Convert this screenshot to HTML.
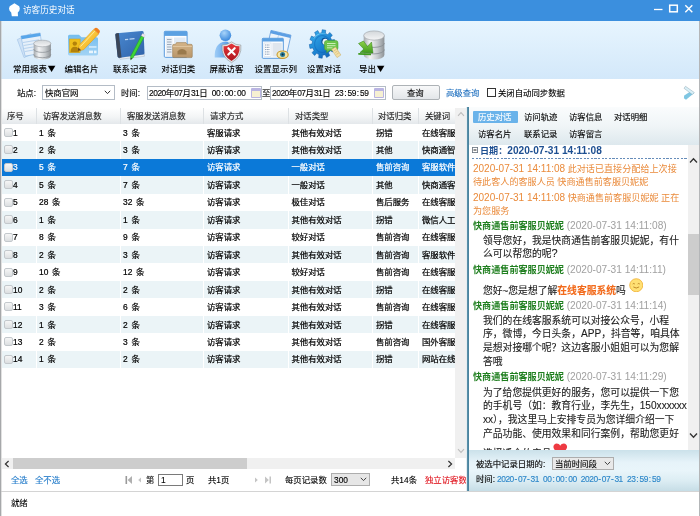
<!DOCTYPE html>
<html lang="zh-CN">
<head>
<meta charset="utf-8">
<title>访客历史对话</title>
<style>
*{box-sizing:border-box;margin:0;padding:0}
html,body{width:700px;height:516px;overflow:hidden;background:#fff}
#app{position:absolute;left:0;top:0;width:700px;height:516px;will-change:transform;transform:translateZ(0)}
body{position:relative;font-family:"Liberation Sans","Noto Sans CJK SC",sans-serif;font-size:8.4px;color:#000;line-height:1;font-weight:400;-webkit-text-stroke:0.120px}
.abs{position:absolute}
.t{position:absolute;white-space:nowrap;line-height:10px}
i,b{font-style:normal;font-weight:normal}
.t b{line-height:0}
#titlebar{left:0;top:0;width:700px;height:21px;background:#3b8fde}
#title{left:23px;top:5px;color:#fff;font-size:8.6px;-webkit-text-stroke:0}
#toolbar{left:1px;top:21px;width:698px;height:58px;background:linear-gradient(#e7f5fe,#d3e8fa)}
.tb{position:absolute;top:21px;height:58px}
.tb .lbl{position:absolute;top:42px;left:50%;transform:translateX(-50%);white-space:nowrap;font-size:8.5px;line-height:10px;color:#111}
.tb svg{position:absolute;top:8px;left:50%;margin-left:-18px;width:36px;height:32px}
#filter{left:1px;top:79px;width:698px;height:29px;background:#fff}
.inp{position:absolute;border:1px solid #b4bcc6;background:#fff}
.mono{font-family:"Liberation Mono","Noto Sans CJK SC",monospace;letter-spacing:-0.84px}
#win{left:0;top:21px;width:700px;height:495px;border-left:1px solid #a6a8aa;border-right:1px solid #b4b6b8;box-shadow:inset 1px 0 0 rgba(200,200,200,.55);pointer-events:none}
/* table */
#thead{left:2px;top:108px;width:453px;height:16px;background:linear-gradient(#ffffff,#f3f5f6 55%,#e4e8eb)}
#thead .t{top:3px;color:#1c1c1c;-webkit-text-stroke:0.150px}
.sep{position:absolute;top:0;width:1px;height:16px;background:#dde1e4}
.row{position:absolute;left:2px;width:453px;height:17.450px;font-weight:400;-webkit-text-stroke:0.220px}
.row.ev i{background:#ebf4f7}
.row.sel{background:#0b79d8;color:#fff}
.row i{position:absolute;top:0;height:100%;display:block}
.row .t{top:3.700px;word-spacing:1.400px}
.row .cb{position:absolute;left:2px;top:4px;width:9px;height:9px;border:1px solid #c3c8cc;border-radius:2px;background:linear-gradient(#f6f6f6,#dcdfe1)}
/* scrollbars */
.sb{position:absolute;background:#f0f0f0}
/* right */
#rborder{left:466px;top:107px;width:3px;height:384px;background:linear-gradient(90deg,#e4edf1 0,#e4edf1 22%,#5e93ab 34%,#447f9c 100%)}
#tabs{left:469px;top:107px;width:230px;height:38px;background:linear-gradient(#fafcfd,#f0f5f7 50%,#dde8ed)}
#tabs .t{font-size:8.4px;color:#111}
#tabsel{left:473px;top:111px;width:45px;height:12px;background:#6ab3ea;border-radius:1px}
#chat{-webkit-text-stroke:0;left:469px;top:145px;width:219px;height:305px;background:#fff;overflow:hidden;font-family:"Liberation Sans","Noto Sans CJK SC",sans-serif}
#chat .t{font-size:9.8px;line-height:13px}
.or{color:#ea8a3a;font-size:9.100px !important}
.d{font-size:10px}
.gn{color:#1f7f1f;font-weight:bold;font-size:9.100px}
.gy{color:#a0a0a0;font-size:10.150px}
.ms{color:#1c1c1c;-webkit-text-stroke:0.100px}
#rbot{left:469px;top:450px;width:230px;height:41px;background:linear-gradient(#cbe1ea 0%,#e6f3f9 30%,#e9f5fa 50%,#dcedf3 75%,#c6dde6 100%)}
.cal{width:10px;height:10px;border:1.5px solid #b9b4e2;border-top-width:3px;background:#f6f0d2;border-radius:1px}
.blue{color:#1e78c8}
.tri{font-size:10px;line-height:0;margin-left:0.800px;display:inline-block;transform:scaleY(.82);font-family:"DejaVu Sans",sans-serif}
.lbl2{font-size:8.500px;color:#000;font-weight:500;-webkit-text-stroke:0}
.dt{font-size:8.400px;letter-spacing:-0.840px}
.dt b{letter-spacing:0;font-family:"Liberation Sans","Noto Sans CJK SC",sans-serif}
.hw{letter-spacing:-0.470px}
.hw i{display:inline-block;width:4.200px;text-align:center;letter-spacing:0;white-space:pre}
.hw b{letter-spacing:0}

</style>
</head>
<body>
<div id="app">
<div id="titlebar" class="abs"></div>
<svg class="abs" style="left:0;top:0" width="24" height="20" viewBox="0 0 24 20"><path d="M14.400 3.300 L19.200 6.200 L19.800 8.500 L19.300 10.800 L17.800 12.600 L18 16.300 L11.800 16.300 L11.200 12.600 L9.600 10.800 L9 8.500 L9.700 6.200 Z" fill="#fff"/></svg>
<div id="title" class="t">访客历史对话</div>
<svg class="abs" style="left:652px;top:2px" width="44" height="14" viewBox="0 0 44 14"><path d="M2 7.5h8.5" stroke="#fff" stroke-width="1.3" fill="none"/><rect x="17.7" y="3.2" width="7.6" height="6.6" stroke="#fff" stroke-width="1.5" fill="none"/><path d="M33.3 3.2l7 7M40.3 3.2l-7 7" stroke="#fff" stroke-width="1.4" fill="none"/></svg>
<div id="toolbar" class="abs"></div>
<svg class="abs" style="left:0;top:21px" width="400" height="58" viewBox="0 21 400 58">
<defs>
<linearGradient id="gSil" x1="0" x2="1" y1="0" y2="0"><stop offset="0" stop-color="#a3a8ac"/><stop offset=".3" stop-color="#f3f4f5"/><stop offset=".65" stop-color="#c9cdd0"/><stop offset="1" stop-color="#8d9296"/></linearGradient>
<linearGradient id="gSilTop" x1="0" x2="0" y1="0" y2="1"><stop offset="0" stop-color="#d3d7da"/><stop offset="1" stop-color="#f4f5f6"/></linearGradient>
<linearGradient id="gBook" x1="0" x2="1" y1="0" y2="1"><stop offset="0" stop-color="#4b8ad2"/><stop offset="1" stop-color="#2f62a8"/></linearGradient>
<radialGradient id="gHead" cx=".4" cy=".3" r=".7"><stop offset="0" stop-color="#a8d4fa"/><stop offset="1" stop-color="#3a88dc"/></radialGradient>
<linearGradient id="gBody" x1="0" x2="1" y1="0" y2="0"><stop offset="0" stop-color="#9fcdf7"/><stop offset="1" stop-color="#3f8ce0"/></linearGradient>
<linearGradient id="gShield" x1="0" x2="0" y1="0" y2="1"><stop offset="0" stop-color="#e8383c"/><stop offset="1" stop-color="#a8141c"/></linearGradient>
<linearGradient id="gGear" x1="0" x2="1" y1="0" y2="1"><stop offset="0" stop-color="#38b0ee"/><stop offset=".55" stop-color="#1c84d2"/><stop offset="1" stop-color="#0e58ae"/></linearGradient>
<linearGradient id="gArrow" x1="0" x2="0" y1="0" y2="1"><stop offset="0" stop-color="#8ed24a"/><stop offset="1" stop-color="#3f9a1c"/></linearGradient>
<linearGradient id="gFolder" x1="0" x2="0" y1="0" y2="1"><stop offset="0" stop-color="#d4b488"/><stop offset="1" stop-color="#b8966a"/></linearGradient>
<linearGradient id="gCard" x1="0" x2="0" y1="0" y2="1"><stop offset="0" stop-color="#74bdee"/><stop offset="1" stop-color="#a2d3f5"/></linearGradient>
<linearGradient id="gPencil" x1="0" x2="1" y1="0" y2="1"><stop offset="0" stop-color="#ffe06a"/><stop offset="1" stop-color="#f2a80c"/></linearGradient>
</defs>
<!-- 1 report -->
<g>
<path d="M17.300 39.500 L31 33.500 L38 52 L24 57.500Z" fill="#cfe2f6" stroke="#9cc0e6" stroke-width=".6"/>
<path d="M20.900 36.100 L40.100 32.900 L43 53 L25.100 56.100Z" fill="#e6f0fa" stroke="#8fb8e4" stroke-width=".6"/>
<path d="M20.900 36.100 L40.100 32.900 L40.600 36 L21.600 39.200Z" fill="#58a6ea"/>
<path d="M23 42.500l16-2.700M23.600 45.500l16-2.700M24.200 48.500l10-1.700M24.800 51.500l9-1.500" stroke="#a9c9ea" stroke-width=".8"/>
<path d="M33.700 43.500 L33.700 56 A8.600 3.600 0 0 0 50.900 56 L50.900 43.500Z" fill="url(#gSil)"/>
<path d="M33.700 49 A8.600 3.400 0 0 0 50.900 49" fill="none" stroke="#858b90" stroke-width=".7"/>
<path d="M33.700 54.300 A8.600 3.400 0 0 0 50.900 54.300" fill="none" stroke="#858b90" stroke-width=".7"/>
<ellipse cx="42.300" cy="43.500" rx="8.600" ry="3.300" fill="url(#gSilTop)" stroke="#9aa0a5" stroke-width=".6"/>
</g>
<!-- 2 card -->
<g>
<path d="M68 36.200 Q68 34.700 69.500 34.700 L79 34.700 L81.500 37.200 L96.500 37.200 Q98 37.200 98 38.700 L98 54 Q98 55.400 96.500 55.400 L69.500 55.400 Q68 55.400 68 54Z" fill="url(#gCard)"/>
<rect x="89" y="46.300" width="7.500" height="1.300" fill="#e4f3fc"/><rect x="89" y="50.600" width="4" height="2.600" fill="#e9f5fd"/><rect x="94" y="50.600" width="2.500" height="2.600" fill="#e9f5fd"/>
<rect x="69.500" y="39" width="10.600" height="13.600" fill="#efbf1c" stroke="#d49c0c" stroke-width=".5"/>
<circle cx="74.800" cy="43.600" r="2.200" fill="#b3820a"/><path d="M70.500 52.300 Q70.500 46.800 74.800 46.800 Q79.100 46.800 79.100 52.300Z" fill="#b3820a"/>
<path d="M79 45.300 L93.800 29.300 L98.700 33.900 L83.500 49.800 L77.600 51Z" fill="url(#gPencil)" stroke="#d8940a" stroke-width=".5"/>
<path d="M93.800 29.300 L95 28.100 Q96.300 27.200 97.500 28.300 L99.500 30.200 Q100.400 31.400 99.500 32.700 L98.700 33.900Z" fill="#f0801e"/>
<path d="M77.600 51 L78.400 47.600 L81.200 50.200Z" fill="#6a4a1a"/>
<path d="M80.500 46.500 L94.800 31.200" stroke="#fff3b0" stroke-width="1" opacity=".8"/>
</g>
<!-- 3 book -->
<g>
<path d="M119 57.500 L144.400 54 L144.400 56.300 L120 59.300Z" fill="#e9edf2" stroke="#9aa6b4" stroke-width=".4"/>
<path d="M115.300 34.800 Q115.300 33.500 116.800 33.300 L141.800 30.900 Q143.500 30.800 143.600 32.300 L144.500 53.200 Q144.500 54.300 143.300 54.500 L119.500 57.800 Q118 57.900 117.600 56.500Z" fill="url(#gBook)"/>
<path d="M115.300 34.800 Q115.300 33.500 116.800 33.300 L118.800 33.100 L121.500 57.500 L119.500 57.800 Q118 57.900 117.600 56.500Z" fill="#3b4658"/>
<path d="M125 39.600l3.200-.3M129.500 39.200l5-.5" stroke="#b9d4f2" stroke-width="1.300"/>
<path d="M141.300 35.800 L144 37.200 L133.300 57.500 L130.700 59.800 L130.700 56.200Z" fill="#3fd636" stroke="#1f9a1c" stroke-width=".5"/>
<path d="M141.300 35.800 L142.500 33.500 L145.200 34.900 L144 37.200Z" fill="#f6e8ee" stroke="#c9b0bc" stroke-width=".3"/>
<path d="M130.700 59.800 L130.700 57.800 L132.200 58.600Z" fill="#333"/>
</g>
<!-- 4 classify -->
<g>
<rect x="164.300" y="31.300" width="22.800" height="26" rx="1" fill="#fbfdff" stroke="#4a8fd8" stroke-width=".9"/>
<rect x="164.300" y="31.300" width="22.800" height="4.600" fill="#5aa0e2"/>
<rect x="166" y="37.500" width="6.500" height="18.500" fill="#e8eef5"/>
<path d="M167 39.500h4.500M167 42h4.500M167 44.500h4.500M167 47h4.500M167 49.500h4.500M167 52h4.500" stroke="#8a99ab" stroke-width=".8"/>
<rect x="174" y="37.500" width="11.500" height="6" fill="#dfeaf6"/>
<path d="M172.600 45.500 Q172.600 44.300 173.800 44.300 L175.500 44.300 L176.500 42.600 L186 42.600 L187 44.300 L191.100 44.300 Q192.300 44.300 192.300 45.500 L192.300 56.400 Q192.300 57.600 191.100 57.600 L173.800 57.600 Q172.600 57.600 172.600 56.400Z" fill="url(#gFolder)" stroke="#8f7248" stroke-width=".5"/>
<path d="M172.900 46.500h19.100" stroke="#e6d0ac" stroke-width=".7"/>
<path d="M177.500 54.500 L177.500 51.200 Q182 47 186.500 51.200 L186.500 54.500Z" fill="#9a7a4c"/>
</g>
<!-- 5 block visitor -->
<g>
<path d="M214.700 57.600 Q214 43 225.400 41.500 Q233.500 42 233 57.600Z" fill="url(#gBody)"/>
<circle cx="225.400" cy="35.300" r="5.800" fill="url(#gHead)"/>
<path d="M231.500 42.600 Q227.500 45.800 222.800 45.600 Q221.600 56.500 231.500 61.900 Q241.400 56.500 240.200 45.600 Q235.500 45.800 231.500 42.600Z" fill="url(#gShield)" stroke="#e4e6e8" stroke-width="1.500"/>
<path d="M231.500 42.600 Q227.500 45.800 222.800 45.600 Q221.600 56.500 231.500 61.900 Q241.400 56.500 240.200 45.600 Q235.500 45.800 231.500 42.600Z" fill="none" stroke="#6f7478" stroke-width=".4" transform="translate(231.500 52) scale(1.080) translate(-231.500 -52)"/>
<path d="M228.300 48.200l6.400 6.400M234.700 48.200l-6.400 6.400" stroke="#fff" stroke-width="2.100" stroke-linecap="round"/>
</g>
<!-- 6 columns -->
<g>
<path d="M271 30.400 L291 35.200 L286.500 55 L266.500 50.200Z" fill="#eef4fb" stroke="#5d98da" stroke-width=".8"/>
<path d="M271 30.400 L291 35.200 L290.300 38 L270.400 33.200Z" fill="#5d9fe4"/>
<path d="M278.500 35 L275.500 49" stroke="#9dbfe6" stroke-width=".6"/>
<rect x="262.300" y="38.300" width="21" height="20" rx=".8" fill="#f8fbfe" stroke="#4a8fd8" stroke-width=".9"/>
<rect x="262.300" y="38.300" width="21" height="3.200" fill="#5aa0e2"/>
<rect x="264" y="43" width="7" height="13.500" fill="#fff" stroke="#b9cbe0" stroke-width=".4"/>
<path d="M265.200 45h4.500M265.200 47.300h4.500M265.200 49.600h4.500M265.200 51.900h4.500M265.200 54.200h4.500" stroke="#4f6f95" stroke-width=".8" stroke-dasharray="1 .6"/>
<rect x="272.500" y="43" width="9.300" height="13.500" fill="#dfe6ee"/>
<ellipse cx="282.600" cy="54.700" rx="5.600" ry="3.700" fill="#f4e6a8" stroke="#c99a2a" stroke-width="1.100"/>
<circle cx="282.600" cy="54.500" r="2.500" fill="#2a7d9c"/><circle cx="282.600" cy="54.500" r="1" fill="#0f2a38"/>
</g>
<!-- 7 gear -->
<g>
<g transform="translate(322.200 44) scale(.9 1) rotate(8)">
<path d="M-2.10 -11.00 L-1.97 -14.16 L1.97 -14.16 L2.10 -11.00 L4.77 -10.13 L6.73 -12.62 L9.92 -10.30 L8.16 -7.67 L9.81 -5.40 L12.86 -6.25 L14.08 -2.50 L11.11 -1.40 L11.11 1.40 L14.08 2.50 L12.86 6.25 L9.81 5.40 L8.16 7.67 L9.92 10.30 L6.73 12.62 L4.77 10.13 L2.10 11.00 L1.97 14.16 L-1.97 14.16 L-2.10 11.00 L-4.77 10.13 L-6.73 12.62 L-9.92 10.30 L-8.16 7.67 L-9.81 5.40 L-12.86 6.25 L-14.08 2.50 L-11.11 1.40 L-11.11 -1.40 L-14.08 -2.50 L-12.86 -6.25 L-9.81 -5.40 L-8.16 -7.67 L-9.92 -10.30 L-6.73 -12.62 L-4.77 -10.13Z" fill="url(#gGear)" stroke="#0d5aa6" stroke-width=".5" stroke-linejoin="round"/>
<circle r="8.500" fill="none" stroke="#0e62b4" stroke-width="1.200" opacity=".45"/>
<path d="M-10.500 -3 A11 11 0 0 1 4 -10.300 A13 13 0 0 0 -10.500 -3Z" fill="#8fdcfa" opacity=".75"/>
<circle cx="2.400" cy="-3" r="3.700" fill="#0b4f94"/>
<circle cx="2.900" cy="-2.600" r="3" fill="#e9f3fb"/>
</g>
<path d="M324.400 43 Q324.400 40.400 327 40.400 L335.500 40.400 Q338 40.400 338 43 L338 47.800 Q338 50.400 335.500 50.400 L329.500 50.400 L326.500 52.800 L327 50.400 Q324.400 50.400 324.400 47.800Z" fill="#6cc44a" stroke="#44982a" stroke-width=".5"/>
<path d="M327 43.500h8.500M327 45.700h8.500M327 47.800h5.500" stroke="#d6f2c4" stroke-width=".9"/>
<path d="M331.600 49.500 L335.500 46.900 L340.900 55 L337 57.600Z" fill="#f2dfa6" stroke="#c8a85c" stroke-width=".5"/>
<path d="M334 50.800l2.500-1.600M335.200 52.600l2.500-1.600M336.400 54.400l2.500-1.600" stroke="#c8a85c" stroke-width=".5"/>
</g>
<!-- 8 export -->
<g>
<path d="M363.700 35.500 L363.700 55 A10.350 4.600 0 0 0 384.400 55 L384.400 35.500Z" fill="url(#gSil)"/>
<path d="M363.700 43 A10.350 4.400 0 0 0 384.400 43" fill="none" stroke="#858b90" stroke-width=".8"/>
<path d="M363.700 49.500 A10.350 4.400 0 0 0 384.400 49.500" fill="none" stroke="#858b90" stroke-width=".8"/>
<ellipse cx="374.050" cy="35.500" rx="10.350" ry="4.600" fill="url(#gSilTop)" stroke="#9aa0a5" stroke-width=".6"/>
<path d="M358.500 43.500 L363.500 41 L367.500 46.500 L371.500 42 L373 53 L360 52.500 L363.800 49Z" fill="url(#gArrow)" stroke="#2f7f14" stroke-width=".5"/>
<path d="M358.300 53 L371 53.500 L371 55.300 L358.300 54.800Z" fill="#3f9a1c"/>
</g>
</svg>

<span class="t lbl2" style="left:13px;top:64px">常用报表<b class="tri">▼</b></span>
<span class="t lbl2" style="left:64.5px;top:64px">编辑名片</span>
<span class="t lbl2" style="left:113px;top:64px">联系记录</span>
<span class="t lbl2" style="left:161.2px;top:64px">对话归类</span>
<span class="t lbl2" style="left:209.6px;top:64px">屏蔽访客</span>
<span class="t lbl2" style="left:254.6px;top:64px">设置显示列</span>
<span class="t lbl2" style="left:307px;top:64px">设置对话</span>
<span class="t lbl2" style="left:359px;top:64px">导出<b class="tri">▼</b></span>
<div id="filter" class="abs"></div>
<span class="t" style="left:17px;top:88px">站点:</span>
<div class="inp" style="left:42px;top:85px;width:73px;height:15px"></div>
<span class="t" style="left:45px;top:88px">快商官网</span>
<svg class="abs" style="left:104px;top:90px" width="7" height="5" viewBox="0 0 7 5"><path d="M.8.8l2.700 2.800L6.200.8" fill="none" stroke="#333" stroke-width="1"/></svg>
<span class="t" style="left:121px;top:88px">时间:</span>
<div class="inp" style="left:147px;top:86px;width:115px;height:14px"></div>
<span class="t hw" style="left:149px;top:88px">2020<b>年</b>07<b>月</b>31<b>日</b><i> </i>00<i>:</i>00<i>:</i>00</span>
<div class="abs cal" style="left:251px;top:88px"></div>
<span class="t" style="left:262px;top:88px">至</span>
<div class="inp" style="left:270px;top:86px;width:116px;height:14px"></div>
<span class="t hw" style="left:272px;top:88px">2020<b>年</b>07<b>月</b>31<b>日</b><i> </i>23<i>:</i>59<i>:</i>59</span>
<div class="abs cal" style="left:374px;top:88px"></div>
<div class="abs" id="qbtn" style="left:392px;top:85px;width:48px;height:15px;border:1px solid #adb2b6;border-radius:2px;background:linear-gradient(#f7f8f9,#e3e6e9)"></div>
<span class="t" style="left:407px;top:88px">查询</span>
<span class="t" style="left:446px;top:88px;color:#1e6fbf">高级查询</span>
<div class="abs" style="left:487px;top:88px;width:9px;height:9px;border:1px solid #333;background:#fff"></div>
<span class="t" style="left:498px;top:88px">关闭自动同步数据</span>
<svg class="abs" style="left:680px;top:84px" width="18" height="18" viewBox="680 84 18 18"><path d="M694.200 93 L686 99.700 L683.900 98.200 L684.200 95.400 L690.400 91.600Z" fill="#7fc6e2"/><path d="M684 88.300 L685.500 86.300 L694.300 92.500 L692.300 94.500Z" fill="#d9f0f8" stroke="#8fa6b2" stroke-width=".5"/></svg>
<div id="thead" class="abs">
<span class="t" style="left:5px">序号</span><span class="t" style="left:41px">访客发送消息数</span><span class="t" style="left:125px">客服发送消息数</span><span class="t" style="left:208px">请求方式</span><span class="t" style="left:293px">对话类型</span><span class="t" style="left:376px">对话归类</span><span class="t" style="left:423px">关键词</span><b class="sep" style="left:34px"></b><b class="sep" style="left:118px"></b><b class="sep" style="left:201px"></b><b class="sep" style="left:286px"></b><b class="sep" style="left:370px"></b><b class="sep" style="left:416px"></b>
</div>
<div id="rows">
<div class="row" style="top:123.90px"><i style="left:0px;width:34px"></i><i style="left:35px;width:83px"></i><i style="left:119px;width:82px"></i><i style="left:202px;width:84px"></i><i style="left:287px;width:83px"></i><i style="left:371px;width:45px"></i><i style="left:417px;width:36px"></i><b class="cb"></b><span class="t" style="left:11px">1</span><span class="t" style="left:37px">1 条</span><span class="t" style="left:121px">3 条</span><span class="t" style="left:205px">客服请求</span><span class="t" style="left:289.5px">其他有效对话</span><span class="t" style="left:374px">拐错</span><span class="t" style="left:420px">在线客服</span></div>
<div class="row ev" style="top:141.35px"><i style="left:0px;width:34px"></i><i style="left:35px;width:83px"></i><i style="left:119px;width:82px"></i><i style="left:202px;width:84px"></i><i style="left:287px;width:83px"></i><i style="left:371px;width:45px"></i><i style="left:417px;width:36px"></i><b class="cb"></b><span class="t" style="left:11px">2</span><span class="t" style="left:37px">2 条</span><span class="t" style="left:121px">3 条</span><span class="t" style="left:205px">访客请求</span><span class="t" style="left:289.5px">其他有效对话</span><span class="t" style="left:374px">其他</span><span class="t" style="left:420px">快商通智</span></div>
<div class="row sel" style="top:158.80px"><i style="left:0px;width:34px"></i><i style="left:35px;width:83px"></i><i style="left:119px;width:82px"></i><i style="left:202px;width:84px"></i><i style="left:287px;width:83px"></i><i style="left:371px;width:45px"></i><i style="left:417px;width:36px"></i><b class="cb"></b><span class="t" style="left:11px">3</span><span class="t" style="left:37px">5 条</span><span class="t" style="left:121px">7 条</span><span class="t" style="left:205px">访客请求</span><span class="t" style="left:289.5px">一般对话</span><span class="t" style="left:374px">售前咨询</span><span class="t" style="left:420px">客服软件</span></div>
<div class="row ev" style="top:176.25px"><i style="left:0px;width:34px"></i><i style="left:35px;width:83px"></i><i style="left:119px;width:82px"></i><i style="left:202px;width:84px"></i><i style="left:287px;width:83px"></i><i style="left:371px;width:45px"></i><i style="left:417px;width:36px"></i><b class="cb"></b><span class="t" style="left:11px">4</span><span class="t" style="left:37px">5 条</span><span class="t" style="left:121px">7 条</span><span class="t" style="left:205px">访客请求</span><span class="t" style="left:289.5px">一般对话</span><span class="t" style="left:374px">其他</span><span class="t" style="left:420px">快商通客</span></div>
<div class="row" style="top:193.70px"><i style="left:0px;width:34px"></i><i style="left:35px;width:83px"></i><i style="left:119px;width:82px"></i><i style="left:202px;width:84px"></i><i style="left:287px;width:83px"></i><i style="left:371px;width:45px"></i><i style="left:417px;width:36px"></i><b class="cb"></b><span class="t" style="left:11px">5</span><span class="t" style="left:37px">28 条</span><span class="t" style="left:121px">32 条</span><span class="t" style="left:205px">访客请求</span><span class="t" style="left:289.5px">极佳对话</span><span class="t" style="left:374px">售后服务</span><span class="t" style="left:420px">在线客服</span></div>
<div class="row ev" style="top:211.15px"><i style="left:0px;width:34px"></i><i style="left:35px;width:83px"></i><i style="left:119px;width:82px"></i><i style="left:202px;width:84px"></i><i style="left:287px;width:83px"></i><i style="left:371px;width:45px"></i><i style="left:417px;width:36px"></i><b class="cb"></b><span class="t" style="left:11px">6</span><span class="t" style="left:37px">1 条</span><span class="t" style="left:121px">1 条</span><span class="t" style="left:205px">访客请求</span><span class="t" style="left:289.5px">其他有效对话</span><span class="t" style="left:374px">拐错</span><span class="t" style="left:420px">微信人工</span></div>
<div class="row" style="top:228.60px"><i style="left:0px;width:34px"></i><i style="left:35px;width:83px"></i><i style="left:119px;width:82px"></i><i style="left:202px;width:84px"></i><i style="left:287px;width:83px"></i><i style="left:371px;width:45px"></i><i style="left:417px;width:36px"></i><b class="cb"></b><span class="t" style="left:11px">7</span><span class="t" style="left:37px">8 条</span><span class="t" style="left:121px">9 条</span><span class="t" style="left:205px">访客请求</span><span class="t" style="left:289.5px">较好对话</span><span class="t" style="left:374px">售前咨询</span><span class="t" style="left:420px">在线客服</span></div>
<div class="row ev" style="top:246.05px"><i style="left:0px;width:34px"></i><i style="left:35px;width:83px"></i><i style="left:119px;width:82px"></i><i style="left:202px;width:84px"></i><i style="left:287px;width:83px"></i><i style="left:371px;width:45px"></i><i style="left:417px;width:36px"></i><b class="cb"></b><span class="t" style="left:11px">8</span><span class="t" style="left:37px">2 条</span><span class="t" style="left:121px">3 条</span><span class="t" style="left:205px">访客请求</span><span class="t" style="left:289.5px">其他有效对话</span><span class="t" style="left:374px">售前咨询</span><span class="t" style="left:420px">客服软件</span></div>
<div class="row" style="top:263.50px"><i style="left:0px;width:34px"></i><i style="left:35px;width:83px"></i><i style="left:119px;width:82px"></i><i style="left:202px;width:84px"></i><i style="left:287px;width:83px"></i><i style="left:371px;width:45px"></i><i style="left:417px;width:36px"></i><b class="cb"></b><span class="t" style="left:11px">9</span><span class="t" style="left:37px">10 条</span><span class="t" style="left:121px">12 条</span><span class="t" style="left:205px">访客请求</span><span class="t" style="left:289.5px">较好对话</span><span class="t" style="left:374px">售前咨询</span><span class="t" style="left:420px">在线客服</span></div>
<div class="row ev" style="top:280.95px"><i style="left:0px;width:34px"></i><i style="left:35px;width:83px"></i><i style="left:119px;width:82px"></i><i style="left:202px;width:84px"></i><i style="left:287px;width:83px"></i><i style="left:371px;width:45px"></i><i style="left:417px;width:36px"></i><b class="cb"></b><span class="t" style="left:11px">10</span><span class="t" style="left:37px">2 条</span><span class="t" style="left:121px">2 条</span><span class="t" style="left:205px">访客请求</span><span class="t" style="left:289.5px">其他有效对话</span><span class="t" style="left:374px">拐错</span><span class="t" style="left:420px">在线客服</span></div>
<div class="row" style="top:298.40px"><i style="left:0px;width:34px"></i><i style="left:35px;width:83px"></i><i style="left:119px;width:82px"></i><i style="left:202px;width:84px"></i><i style="left:287px;width:83px"></i><i style="left:371px;width:45px"></i><i style="left:417px;width:36px"></i><b class="cb"></b><span class="t" style="left:11px">11</span><span class="t" style="left:37px">3 条</span><span class="t" style="left:121px">6 条</span><span class="t" style="left:205px">访客请求</span><span class="t" style="left:289.5px">其他有效对话</span><span class="t" style="left:374px">售前咨询</span><span class="t" style="left:420px">在线客服</span></div>
<div class="row ev" style="top:315.85px"><i style="left:0px;width:34px"></i><i style="left:35px;width:83px"></i><i style="left:119px;width:82px"></i><i style="left:202px;width:84px"></i><i style="left:287px;width:83px"></i><i style="left:371px;width:45px"></i><i style="left:417px;width:36px"></i><b class="cb"></b><span class="t" style="left:11px">12</span><span class="t" style="left:37px">1 条</span><span class="t" style="left:121px">2 条</span><span class="t" style="left:205px">访客请求</span><span class="t" style="left:289.5px">其他有效对话</span><span class="t" style="left:374px">拐错</span><span class="t" style="left:420px">在线客服</span></div>
<div class="row" style="top:333.30px"><i style="left:0px;width:34px"></i><i style="left:35px;width:83px"></i><i style="left:119px;width:82px"></i><i style="left:202px;width:84px"></i><i style="left:287px;width:83px"></i><i style="left:371px;width:45px"></i><i style="left:417px;width:36px"></i><b class="cb"></b><span class="t" style="left:11px">13</span><span class="t" style="left:37px">2 条</span><span class="t" style="left:121px">3 条</span><span class="t" style="left:205px">访客请求</span><span class="t" style="left:289.5px">其他有效对话</span><span class="t" style="left:374px">售前咨询</span><span class="t" style="left:420px">国外客服</span></div>
<div class="row ev" style="top:350.75px"><i style="left:0px;width:34px"></i><i style="left:35px;width:83px"></i><i style="left:119px;width:82px"></i><i style="left:202px;width:84px"></i><i style="left:287px;width:83px"></i><i style="left:371px;width:45px"></i><i style="left:417px;width:36px"></i><b class="cb"></b><span class="t" style="left:11px">14</span><span class="t" style="left:37px">1 条</span><span class="t" style="left:121px">2 条</span><span class="t" style="left:205px">访客请求</span><span class="t" style="left:289.5px">其他有效对话</span><span class="t" style="left:374px">拐错</span><span class="t" style="left:420px">网站在线</span></div>
</div>
<div class="sb" style="left:455px;top:108px;width:11px;height:350px"></div>
<svg class="abs" style="left:457px;top:111px" width="8" height="6" viewBox="0 0 8 6"><path d="M1 4.800l3-3.200 3 3.200" fill="none" stroke="#bdbdbd" stroke-width="1.100"/></svg>
<svg class="abs" style="left:457px;top:448px" width="8" height="6" viewBox="0 0 8 6"><path d="M1 1.200l3 3.200 3-3.200" fill="none" stroke="#bdbdbd" stroke-width="1.100"/></svg>
<div class="sb" style="left:2px;top:458px;width:453px;height:11px"></div>
<div class="abs" style="left:13px;top:458px;width:234px;height:11px;background:#cdcdcd"></div>
<svg class="abs" style="left:4px;top:460px" width="6" height="8" viewBox="0 0 6 8"><path d="M4.600 1l-3.200 3 3.200 3" fill="none" stroke="#333" stroke-width="1.200"/></svg>
<svg class="abs" style="left:447px;top:460px" width="6" height="8" viewBox="0 0 6 8"><path d="M1.400 1l3.200 3-3.200 3" fill="none" stroke="#333" stroke-width="1.200"/></svg>
<span class="t blue" style="left:11px;top:475px">全选</span>
<span class="t blue" style="left:35px;top:475px">全不选</span>
<svg class="abs" style="left:125px;top:476px" width="18" height="8" viewBox="0 0 18 8"><rect x="0.500" y="0" width="1.600" height="8" fill="#9a9a9a"/><path d="M7 0L2.600 4 7 8z" fill="#b0b0b0"/><path d="M16 1.500L13.200 4 16 6.500z" fill="#c4c4c4"/></svg>
<span class="t" style="left:146px;top:475px">第</span>
<div class="inp" style="left:158px;top:474px;width:25px;height:12px;border-color:#7a7a7a"></div>
<span class="t" style="left:161px;top:475px">1</span>
<span class="t" style="left:186px;top:475px">页</span>
<span class="t" style="left:208px;top:475px">共1页</span>
<svg class="abs" style="left:254px;top:476px" width="19" height="8" viewBox="0 0 19 8"><path d="M1 1.500L3.800 4 1 6.500z" fill="#c4c4c4"/><path d="M11 0.500L14.800 4 11 7.500z" fill="#c4c4c4"/><rect x="15.500" y="0.500" width="1.500" height="7" fill="#c4c4c4"/></svg>
<span class="t" style="left:285px;top:475px">每页记录数</span>
<div class="abs" style="left:331px;top:473px;width:39px;height:13px;border:1px solid #adadad;background:#e6e6e6"></div>
<span class="t" style="left:334px;top:475px">300</span>
<svg class="abs" style="left:360px;top:477px" width="7" height="5" viewBox="0 0 7 5"><path d="M.8.8l2.700 2.800L6.200.8" fill="none" stroke="#444" stroke-width="1"/></svg>
<span class="t" style="left:391px;top:475px">共14条</span>
<div class="abs" style="left:425px;top:472px;width:41px;height:16px;overflow:hidden"><span class="t" style="left:0;top:3px;color:#e0141e">独立访客数：</span></div>
<div class="abs" style="left:1px;top:491px;width:698px;height:1px;background:#d4d4d4"></div>
<span class="t" style="left:11px;top:498px">就绪</span>
<div id="rborder" class="abs"></div>
<div id="tabs" class="abs"></div>
<div id="tabsel" class="abs"></div>
<span class="t" style="left:478px;top:112px;color:#fff">历史对话</span>
<span class="t" style="left:524px;top:112px">访问轨迹</span>
<span class="t" style="left:569px;top:112px">访客信息</span>
<span class="t" style="left:614px;top:112px">对话明细</span>
<span class="t" style="left:478px;top:129px">访客名片</span>
<span class="t" style="left:524px;top:129px">联系记录</span>
<span class="t" style="left:569px;top:129px">访客留言</span>
<div id="chat" class="abs">
<svg class="abs" style="left:3px;top:1.500px" width="6" height="6" viewBox="0 0 7 7"><rect x=".5" y=".5" width="6" height="6" fill="#fff" stroke="#6f7a85" stroke-width="1"/><path d="M1.800 3.500h3.400" stroke="#111" stroke-width="1.100"/></svg>
<span class="t" style="left:11px;top:-0.200px;font-size:9.100px;font-weight:bold;color:#1d4f91">日期：<b class="d" style="font-weight:bold;font-size:10.150px">2020-07-31 14:11:08</b></span>
<div class="abs" style="left:3px;top:12.500px;width:216px;height:1px;background:repeating-linear-gradient(90deg,#4a78ad 0,#4a78ad 2.200px,transparent 2.200px,transparent 3.600px);opacity:.85"></div>
<span class="t or" style="left:4px;top:18.200px"><b class="d">2020-07-31 14:11:08</b> 此对话已直接分配给上次接</span>
<span class="t or" style="left:4px;top:31.400px">待此客人的客服人员 快商通售前客服贝妮妮</span>
<span class="t or" style="left:4px;top:46.600px"><b class="d">2020-07-31 14:11:08</b> 快商通售前客服贝妮妮 正在</span>
<span class="t or" style="left:4px;top:59.700px">为您服务</span>
<span class="t" style="left:4px;top:74px"><b class="gn">快商通售前客服贝妮妮</b> <b class="gy">(2020-07-31 14:11:08)</b></span>
<span class="t ms" style="left:14px;top:88.500px">领导您好，我是快商通售前客服贝妮妮，有什</span>
<span class="t ms" style="left:14px;top:102px">么可以帮您的呢<b class="d" style="font-size:11px">?</b></span>
<span class="t" style="left:4px;top:118px"><b class="gn">快商通售前客服贝妮妮</b> <b class="gy">(2020-07-31 14:11:11)</b></span>
<span class="t ms" style="left:14px;top:139px">您好~您是想了解<b style="color:#f26a1b;font-weight:bold">在线客服系统</b>吗</span>
<svg class="abs" style="left:159.500px;top:132.600px" width="14.500" height="14.500" viewBox="0 0 14 14"><circle cx="7" cy="7" r="6.300" fill="#ffe074" stroke="#f0b030" stroke-width=".8"/><path d="M3.600 5.800q1-1 2 0M8.400 5.800q1-1 2 0" fill="none" stroke="#a8690c" stroke-width=".7"/><path d="M4.200 8.600q2.800 2.200 5.600 0" fill="none" stroke="#a8690c" stroke-width=".7"/></svg>
<span class="t" style="left:4px;top:154px"><b class="gn">快商通售前客服贝妮妮</b> <b class="gy">(2020-07-31 14:11:14)</b></span>
<span class="t ms" style="left:14px;top:168.500px">我们的在线客服系统可以对接公众号，小程</span>
<span class="t ms" style="left:14px;top:182px">序，微博，今日头条，<b class="d" style="font-size:10.100px">APP</b>，抖音等，咱具体</span>
<span class="t ms" style="left:14px;top:196px">是想对接哪个呢？这边客服小姐姐可以为您解</span>
<span class="t ms" style="left:14px;top:209.500px">答哦</span>
<span class="t" style="left:4px;top:225px"><b class="gn">快商通售前客服贝妮妮</b> <b class="gy">(2020-07-31 14:11:29)</b></span>
<span class="t ms" style="left:14px;top:240.500px">为了给您提供更好的服务，您可以提供一下您</span>
<span class="t ms" style="left:14px;top:254px">的手机号（如：教育行业，李先生，<b class="d" style="font-size:10.100px">150xxxxxx</b></span>
<span class="t ms" style="left:14px;top:268px"><b class="d" style="font-size:10.100px">xx</b>），我这里马上安排专员为您详细介绍一下</span>
<span class="t ms" style="left:14px;top:281.500px">产品功能、使用效果和同行案例，帮助您更好</span>
<span class="t ms" style="left:14px;top:302px">选择适合的产品</span>
<svg class="abs" style="left:84px;top:298px" width="14.500" height="13" viewBox="0 0 17 15"><path d="M8.500 14 C2 9 .5 6.500 .5 4.300 C.5 2 2.300 .5 4.300 .5 C6 .5 7.600 1.500 8.500 3 C9.400 1.500 11 .5 12.700 .5 C14.700 .5 16.500 2 16.500 4.300 C16.500 6.500 15 9 8.500 14Z" fill="#ee3a42"/></svg>
</div>
<div class="sb" style="left:688px;top:145px;width:11px;height:305px"></div>
<div class="abs" style="left:688px;top:234px;width:11px;height:61px;background:#cdcdcd"></div>
<svg class="abs" style="left:689px;top:157px" width="9" height="7" viewBox="0 0 9 7"><path d="M1 5.500l3.500-3.800 3.500 3.800" fill="none" stroke="#333" stroke-width="1.300"/></svg>
<svg class="abs" style="left:689px;top:431.500px" width="9" height="7" viewBox="0 0 9 7"><path d="M1 1.500l3.500 3.800 3.500-3.800" fill="none" stroke="#333" stroke-width="1.300"/></svg>
<div id="rbot" class="abs"></div>
<span class="t" style="left:476px;top:459px">被选中记录日期的:</span>
<div class="abs" style="left:552px;top:457px;width:62px;height:13px;border:1px solid #adadad;background:#e9e9e9"></div>
<span class="t" style="left:555px;top:459px">当前时间段</span>
<svg class="abs" style="left:604px;top:461px" width="7" height="5" viewBox="0 0 7 5"><path d="M.8.8l2.700 2.800L6.200.8" fill="none" stroke="#444" stroke-width="1"/></svg>
<span class="t" style="left:476px;top:474px">时间:</span>
<span class="t hw" style="left:497px;top:474px;color:#2b86c9">2020<i>-</i>07<i>-</i>31<i> </i>00<i>:</i>00<i>:</i>00<i> </i>2020<i>-</i>07<i>-</i>31<i> </i>23<i>:</i>59<i>:</i>59</span>
<div id="win" class="abs"></div>
</div>
</body>
</html>
